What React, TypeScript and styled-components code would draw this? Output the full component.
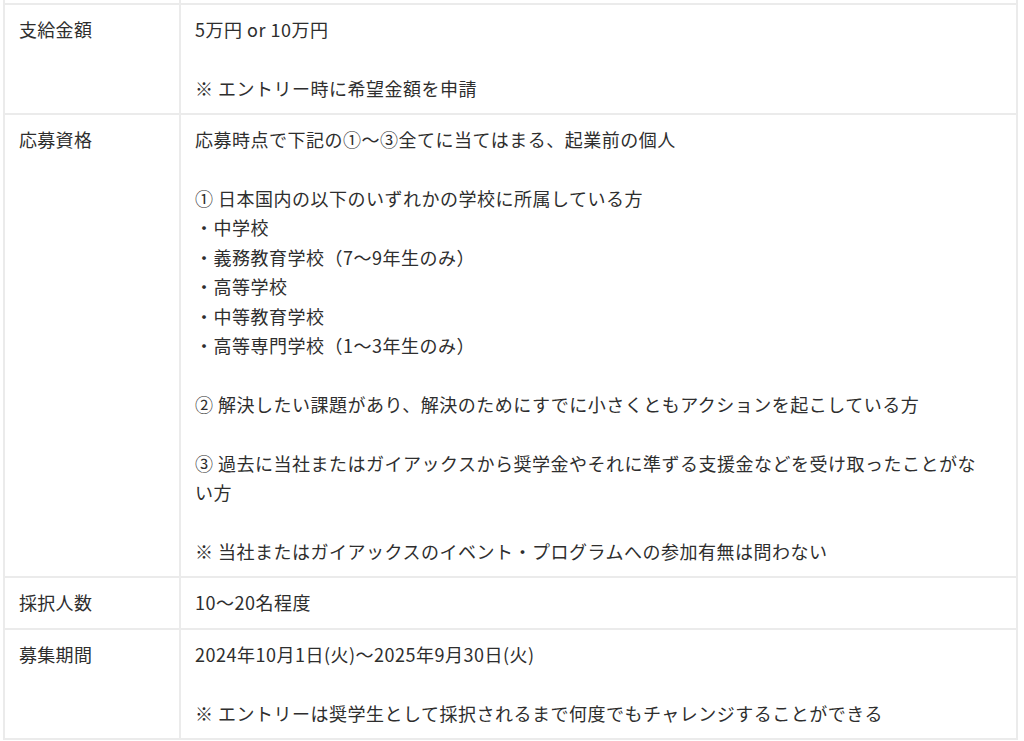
import React from 'react'
import styled, { createGlobalStyle } from 'styled-components'

const GlobalStyle = createGlobalStyle`
  html, body {
    margin: 0;
    padding: 0;
    background: #ffffff;
  }
  body {
    font-family: "Noto Sans CJK JP", "Noto Sans", sans-serif;
    color: #2e2e2e;
  }
`

const rows = [
  {
    label: '支給金額',
    lines: ['5万円 or 10万円', '', '※ エントリー時に希望金額を申請'],
  },
  {
    label: '応募資格',
    lines: [
      '応募時点で下記の①〜③全てに当てはまる、起業前の個人',
      '',
      '① 日本国内の以下のいずれかの学校に所属している方',
      '・中学校',
      '・義務教育学校（7〜9年生のみ）',
      '・高等学校',
      '・中等教育学校',
      '・高等専門学校（1〜3年生のみ）',
      '',
      '② 解決したい課題があり、解決のためにすでに小さくともアクションを起こしている方',
      '',
      '③ 過去に当社またはガイアックスから奨学金やそれに準ずる支援金などを受け取ったことがな',
      'い方',
      '',
      '※ 当社またはガイアックスのイベント・プログラムへの参加有無は問わない',
    ],
  },
  {
    label: '採択人数',
    lines: ['10〜20名程度'],
  },
  {
    label: '募集期間',
    lines: ['2024年10月1日(火)〜2025年9月30日(火)', '', '※ エントリーは奨学生として採択されるまで何度でもチャレンジすることができる'],
  },
]

const App = () => {
  return (
    <>
      <GlobalStyle />
      <Table>
        <Spill>
          <Cell />
          <Cell />
        </Spill>
        {rows.map((row) => (
          <Row key={row.label}>
            <Label>{row.label}</Label>
            <Value>
              {row.lines.map((line, i) => (
                <Line key={i}>{line === '' ? '\u00a0' : line}</Line>
              ))}
            </Value>
          </Row>
        ))}
      </Table>
    </>
  )
}

export default App

const Table = styled.div`
  margin: 0 6px 0 3px;
  border-left: 2px solid #ebebeb;
  border-right: 2px solid #ebebeb;
`
const Row = styled.div`
  display: grid;
  grid-template-columns: 176px 1fr;
  border-bottom: 2px solid #ebebeb;
`
const Spill = styled(Row)`
  height: 3px;
  overflow: hidden;
`
const Cell = styled.div`
  border-right: 2px solid #ebebeb;
  &:last-child {
    border-right: none;
  }
`
const Label = styled.div`
  padding: 10px 14px;
  border-right: 2px solid #ebebeb;
  font-size: 18px;
  line-height: 29.4px;
  letter-spacing: 0.3px;
`
const Value = styled.div`
  padding: 10px 14px;
  font-size: 18px;
  line-height: 29.4px;
  letter-spacing: 0.5px;
`
const Line = styled.div`
  white-space: nowrap;
`
